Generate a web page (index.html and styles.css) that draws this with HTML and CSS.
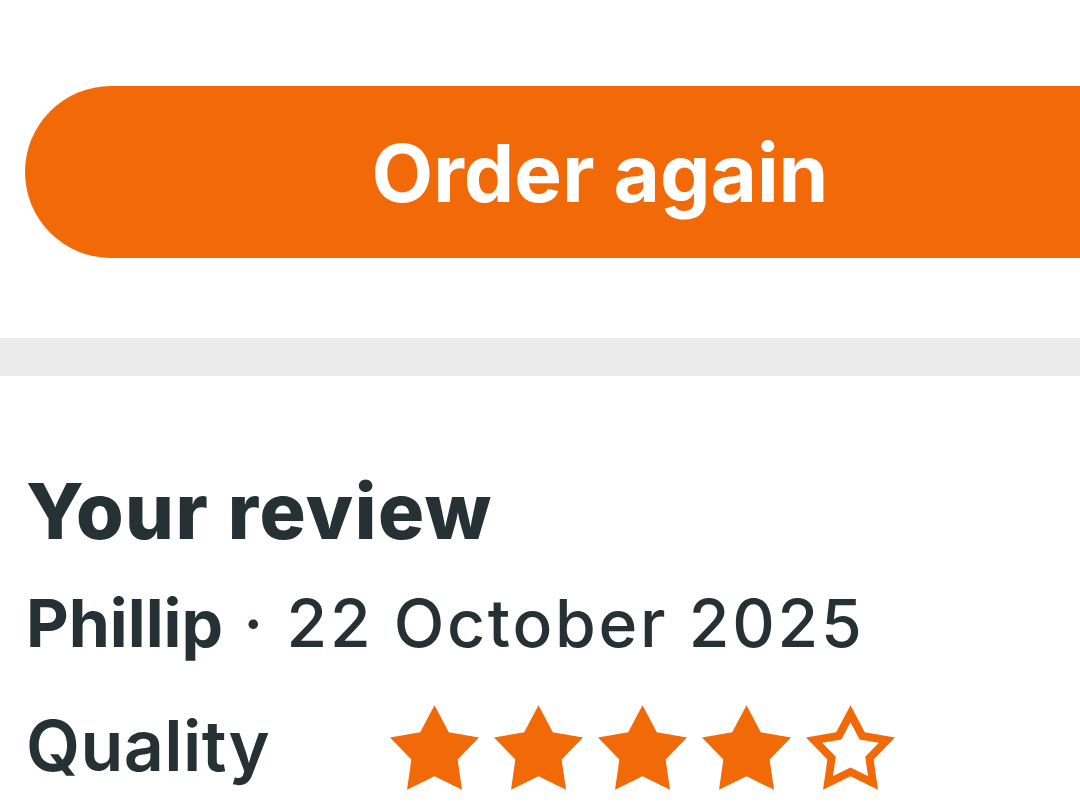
FILE: index.html
```html
<!DOCTYPE html>
<html lang="en">
<head>
    <meta charset="UTF-8">
    <meta name="viewport" content="width=device-width, initial-scale=1.0">
    <title>Your order</title>
    <link rel="stylesheet" href="styles.css">
</head>
<body>

<div class="actions">
    <button class="order-button">Order again</button>
</div>

<div class="divider"></div>

<div class="review">
    <h2>Your review</h2>
    <p class="meta"><strong>Phillip</strong> · 22 October 2025</p>

    <div class="rating-row">
        <span class="rating-label">Quality</span>
        <div class="stars">
            <svg class="star" viewBox="0.489 0 19.022 18.09"><path d="M10 0L13.057 5.793 19.511 6.91 14.946 11.607 15.878 18.09 10 15.2 4.122 18.09 5.054 11.607 0.489 6.91 6.943 5.793Z"/></svg>
            <svg class="star" viewBox="0.489 0 19.022 18.09"><path d="M10 0L13.057 5.793 19.511 6.91 14.946 11.607 15.878 18.09 10 15.2 4.122 18.09 5.054 11.607 0.489 6.91 6.943 5.793Z"/></svg>
            <svg class="star" viewBox="0.489 0 19.022 18.09"><path d="M10 0L13.057 5.793 19.511 6.91 14.946 11.607 15.878 18.09 10 15.2 4.122 18.09 5.054 11.607 0.489 6.91 6.943 5.793Z"/></svg>
            <svg class="star" viewBox="0.489 0 19.022 18.09"><path d="M10 0L13.057 5.793 19.511 6.91 14.946 11.607 15.878 18.09 10 15.2 4.122 18.09 5.054 11.607 0.489 6.91 6.943 5.793Z"/></svg>
            <svg class="star empty" viewBox="0.489 0 19.022 18.09">
                <defs><clipPath id="star-clip"><path d="M10 0L13.057 5.793 19.511 6.91 14.946 11.607 15.878 18.09 10 15.2 4.122 18.09 5.054 11.607 0.489 6.91 6.943 5.793Z"/></clipPath></defs>
                <path clip-path="url(#star-clip)" d="M10 0L13.057 5.793 19.511 6.91 14.946 11.607 15.878 18.09 10 15.2 4.122 18.09 5.054 11.607 0.489 6.91 6.943 5.793Z"/>
            </svg>
        </div>
    </div>
</div>

</body>
</html>
```

FILE: styles.css
```css
body {
    margin: 0;
    font-family: Inter, "Open Sans", sans-serif;
    background-color: #fff;
    color: #263135;
}
.actions {
    padding: 86px 0 80px 25px;
}
.order-button {
    display: block;
    width: 100%;
    height: 172px;
    padding: 0 0 0 95px;
    background-color: #f26907;
    color: #fff;
    border: none;
    border-radius: 86px 0 0 86px;
    font-family: Inter, sans-serif;
    font-size: 80px;
    font-weight: 700;
    cursor: pointer;
}
.divider {
    height: 38px;
    background-color: #ebebeb;
}
.review {
    padding: 90px 26px 0;
}
.review h2 {
    margin: 0;
    font-size: 77px;
    font-weight: 800;
    line-height: 90px;
    letter-spacing: 1.5px;
}
.meta {
    margin: 27px 0 0;
    font-size: 66px;
    font-weight: 500;
    line-height: 80px;
    letter-spacing: 2.75px;
}
.meta strong {
    font-weight: 700;
    letter-spacing: 0;
}
.rating-row {
    display: grid;
    grid-template-columns: 364px auto;
    align-items: center;
    margin-top: 38px;
}
.rating-label {
    font-size: 70px;
    font-weight: 600;
    letter-spacing: 0.4px;
}
.stars {
    display: flex;
    gap: 15px;
    padding-top: 4px;
}
.star {
    width: 89px;
    height: 85px;
    fill: #f26907;
}
.star.empty {
    fill: none;
    stroke: #f26907;
    stroke-width: 3.4;
}
```
